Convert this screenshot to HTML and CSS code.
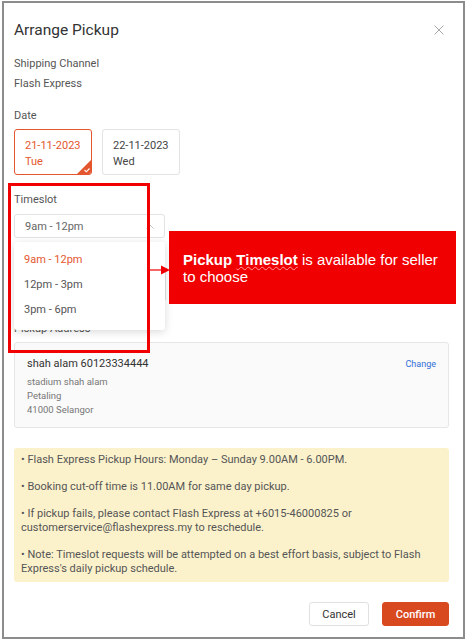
FILE: index.html
```html
<!DOCTYPE html>
<html lang="en">
  <head>
    <title>Arrange Pickup</title>
    <meta charset="utf-8" />
    <link rel="stylesheet" href="styles.css">
  </head>
  <body>
    <div class="frame">
      <div class="header">
        <h1>Arrange Pickup</h1>
        <svg class="close" width="10" height="10" viewBox="0 0 10 10">
          <path d="M0.5 0.5 L9.5 9.5 M9.5 0.5 L0.5 9.5" stroke="#a8a8a8" stroke-width="1" fill="none" />
        </svg>
      </div>

      <div class="label first">Shipping Channel</div>
      <div class="value">Flash Express</div>

      <div class="label date-label">Date</div>
      <div class="dates">
        <div class="date-card selected">
          <div>21-11-2023</div>
          <div>Tue</div>
          <span class="corner">
            <svg width="16" height="16" viewBox="0 0 16 16">
              <path d="M16 0 L16 16 L0 16 Z" fill="#e4572e" />
              <path d="M8.5 11 L10.3 12.8 L13.5 9.5" stroke="#fff" stroke-width="1.1" fill="none" />
            </svg>
          </span>
        </div>
        <div class="date-card">
          <div>22-11-2023</div>
          <div>Wed</div>
        </div>
      </div>

      <div class="label slot-label">Timeslot</div>
      <div class="select">
        <span>9am - 12pm</span>
        <svg width="8" height="5" viewBox="0 0 8 5">
          <path d="M0.5 4.5 L4 1 L7.5 4.5" stroke="#c4c4c4" stroke-width="1" fill="none" />
        </svg>
      </div>
      <div class="field"></div>

      <div class="label address-label">Pickup Address</div>
      <div class="address">
        <div class="address-text">
          <div class="name">shah alam 60123334444</div>
          <div class="line first-line">stadium shah alam</div>
          <div class="line">Petaling</div>
          <div class="line">41000 Selangor</div>
        </div>
        <a class="change">Change</a>
      </div>

      <div class="note">
        <p>• Flash Express Pickup Hours: Monday – Sunday 9.00AM - 6.00PM.</p>
        <p>• Booking cut-off time is 11.00AM for same day pickup.</p>
        <p>• If pickup fails, please contact Flash Express at +6015-46000825 or customerservice@flashexpress.my to reschedule.</p>
        <p>• Note: Timeslot requests will be attempted on a best effort basis, subject to Flash Express's daily pickup schedule.</p>
      </div>

      <div class="footer">
        <button class="btn cancel">Cancel</button>
        <button class="btn confirm">Confirm</button>
      </div>

      <!-- dropdown opened over the form -->
      <div class="dropdown">
        <div class="option active">9am - 12pm</div>
        <div class="option">12pm - 3pm</div>
        <div class="option">3pm - 6pm</div>
      </div>

      <!-- annotation -->
      <div class="highlight"></div>
      <svg class="arrow" width="20" height="12" viewBox="0 0 20 12">
        <path d="M0 6 L12 6" stroke="#f00000" stroke-width="1.2" />
        <path d="M11 1.5 L20 6 L11 10.5 Z" fill="#f00000" />
      </svg>
      <div class="callout">
        <div class="callout-line"><b>Pickup</b> <b class="squiggle">Timeslot</b> is available for seller</div>
        <div class="callout-line">to choose</div>
      </div>
    </div>
  </body>
</html>
```

FILE: styles.css
```css
body {
  margin: 0;
  padding: 0;
  background: #fff;
  font-family: Roboto, "Liberation Sans", sans-serif;
  color: #333;
}

.frame {
  position: relative;
  box-sizing: border-box;
  width: 463px;
  height: 638px;
  margin: 1px 0 0 2px;
  padding: 17px 14px 11px 10px;
  border: 2px solid #8c8c8c;
  display: flex;
  flex-direction: column;
}

.header {
  display: flex;
  align-items: center;
  justify-content: space-between;
  height: 20px;
}

h1 {
  margin: 0;
  font-size: 15.5px;
  font-weight: 400;
  line-height: 20px;
  color: #333;
}

.close {
  margin-right: 5px;
}

.label,
.value {
  font-size: 11px;
  line-height: 16px;
  color: #555;
}

.label.first {
  margin-top: 16px;
}

.value {
  margin-top: 4px;
}

.date-label {
  margin-top: 16px;
}

.dates {
  display: flex;
  gap: 10px;
  margin-top: 5px;
}

.date-card {
  position: relative;
  box-sizing: border-box;
  width: 78px;
  height: 46px;
  padding: 8px 0 0 10px;
  border: 1px solid #e3e3e3;
  border-radius: 3px;
  font-size: 11px;
  line-height: 16px;
  color: #444;
  overflow: hidden;
}

.date-card.selected {
  border-color: #e4572e;
  color: #e4572e;
}

.corner {
  position: absolute;
  right: -1px;
  bottom: -1px;
  line-height: 0;
}

.slot-label {
  margin-top: 17px;
}

.select {
  box-sizing: border-box;
  width: 151px;
  height: 24px;
  margin-top: 6px;
  padding: 0 10px;
  border: 1px solid #e3e3e3;
  border-radius: 3px;
  display: flex;
  align-items: center;
  justify-content: space-between;
  font-size: 11px;
  color: #666;
}

.field {
  box-sizing: border-box;
  width: 152px;
  height: 35px;
  margin-top: 29px;
  border: 1px solid #e3e3e3;
  border-radius: 3px;
}

.address-label {
  margin-top: 19px;
}

.address {
  box-sizing: border-box;
  height: 86px;
  margin-top: 5px;
  padding: 13px 12px 12px 12px;
  background: #fafafa;
  border: 1px solid #e6e6e6;
  border-radius: 3px;
  display: flex;
  justify-content: space-between;
}

.name {
  font-size: 11px;
  line-height: 16px;
  color: #333;
}

.line {
  font-size: 9.5px;
  line-height: 14px;
  color: #777;
}

.first-line {
  margin-top: 3px;
}

.change {
  font-size: 9px;
  line-height: 16px;
  color: #2f6fd6;
}

.note {
  box-sizing: border-box;
  height: 134px;
  margin-top: 20px;
  padding: 5px 7px 6px 7px;
  background: #fbf2cc;
  border-radius: 3px;
  font-size: 11px;
  line-height: 14px;
  color: #555;
}

.note p {
  margin: 0 0 13px 0;
}

.note p:last-child {
  margin-bottom: 0;
}

.footer {
  display: flex;
  justify-content: flex-end;
  gap: 13px;
  margin-top: 20px;
}

.btn {
  box-sizing: border-box;
  height: 24px;
  border-radius: 3px;
  font-family: Roboto, "Liberation Sans", sans-serif;
  font-size: 11px;
  padding: 0;
}

.cancel {
  width: 60px;
  background: #fff;
  border: 1px solid #e0e0e0;
  color: #333;
}

.confirm {
  width: 67px;
  background: #d9491f;
  border: 1px solid #d9491f;
  color: #fff;
  font-weight: 500;
}

.dropdown {
  position: absolute;
  left: 10px;
  top: 239px;
  box-sizing: border-box;
  width: 151px;
  height: 88px;
  padding: 5px 0 8px 0;
  background: #fff;
  border-radius: 3px;
  box-shadow: 0 2px 8px rgba(0, 0, 0, 0.15);
}

.option {
  height: 25px;
  line-height: 25px;
  padding-left: 10px;
  font-size: 11px;
  color: #555;
}

.option.active {
  color: #e4572e;
}

.highlight {
  position: absolute;
  left: 4px;
  top: 180px;
  box-sizing: border-box;
  width: 142px;
  height: 170px;
  border: 3px solid #f00000;
}

.arrow {
  position: absolute;
  left: 146px;
  top: 261px;
}

.callout {
  position: absolute;
  left: 165px;
  top: 228px;
  box-sizing: border-box;
  width: 287px;
  height: 73px;
  padding: 0 14px;
  background: #f00000;
  display: flex;
  flex-direction: column;
  justify-content: center;
  font-family: "Liberation Sans", Arial, sans-serif;
  font-size: 15px;
  line-height: 17px;
  color: #fff;
}

.callout-line {
  white-space: nowrap;
}

.squiggle {
  text-decoration: underline wavy #ff9a9a;
  text-decoration-thickness: 1px;
}
```
